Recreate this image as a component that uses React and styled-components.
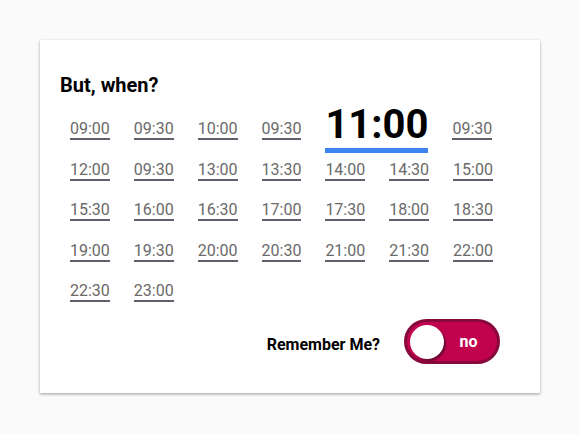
import React from 'react'
import styled, { createGlobalStyle } from 'styled-components'

const Global = createGlobalStyle`
  html, body {
    margin: 0;
    padding: 0;
    background: #fafafa;
    font-family: Roboto, "Liberation Sans", Arial, sans-serif;
  }
`

const Page = styled.div`
  padding: 40px;
  width: 500px;
`

const Card = styled.div`
  background: #fff;
  padding: 20px;
  box-shadow: 0 1px 3px rgba(0, 0, 0, 0.28), 0 2px 2px rgba(0, 0, 0, 0.08);
`

const Title = styled.h2`
  margin: 13px 0 22px;
  font-size: 20px;
  line-height: 24px;
  font-weight: 700;
  color: #000;
`

const Times = styled.div`
  display: flex;
  flex-wrap: wrap;
  align-items: center;
  column-gap: 24px;
  row-gap: 19.5px;
  padding: 0 10px;
`

const Time = styled.a`
  display: block;
  font-size: ${p => (p.$active ? '40px' : '16px')};
  line-height: ${p => (p.$active ? '40px' : '19px')};
  font-weight: ${p => (p.$active ? 700 : 400)};
  color: ${p => (p.$active ? '#000' : '#6a6a6a')};
  border-bottom: ${p => (p.$active ? '5px solid #3d84ee' : '2px solid #5e616b')};
  padding-bottom: ${p => (p.$active ? '3px' : '0')};
  margin: ${p => (p.$active ? '-14px 0 -13px' : '0')};
  cursor: pointer;
`

const Footer = styled.div`
  display: flex;
  justify-content: flex-end;
  align-items: center;
  gap: 24px;
  margin: 17px 20px 9px 0;
`

const Label = styled.span`
  font-size: 16px;
  font-weight: 700;
  color: #000;
  padding-top: 5px;
`

const Switch = styled.button`
  box-sizing: border-box;
  display: flex;
  align-items: center;
  width: 96px;
  height: 45px;
  padding: 0 0 0 3px;
  border: 3px solid #86083c;
  border-radius: 23px;
  background: #c1024f;
  cursor: pointer;
`

const Knob = styled.span`
  width: 34px;
  height: 34px;
  border-radius: 50%;
  background: #fff;
  box-shadow: 2px 2px 1px #6e0a33;
`

const SwitchText = styled.span`
  flex: 1;
  text-align: center;
  padding-right: 4px;
  font-family: Roboto, "Liberation Sans", Arial, sans-serif;
  font-size: 16px;
  font-weight: 700;
  color: #fff;
`

const times = [
  '09:00', '09:30', '10:00', '09:30', '11:00', '09:30',
  '12:00', '09:30', '13:00', '13:30', '14:00', '14:30', '15:00',
  '15:30', '16:00', '16:30', '17:00', '17:30', '18:00', '18:30',
  '19:00', '19:30', '20:00', '20:30', '21:00', '21:30', '22:00',
  '22:30', '23:00',
]

export default function App() {
  return (
    <>
      <Global />
      <Page>
        <Card>
          <Title>But, when?</Title>
          <Times>
            {times.map((t, i) => (
              <Time key={i} $active={i === 4}>{t}</Time>
            ))}
          </Times>
          <Footer>
            <Label>Remember Me?</Label>
            <Switch>
              <Knob />
              <SwitchText>no</SwitchText>
            </Switch>
          </Footer>
        </Card>
      </Page>
    </>
  )
}
